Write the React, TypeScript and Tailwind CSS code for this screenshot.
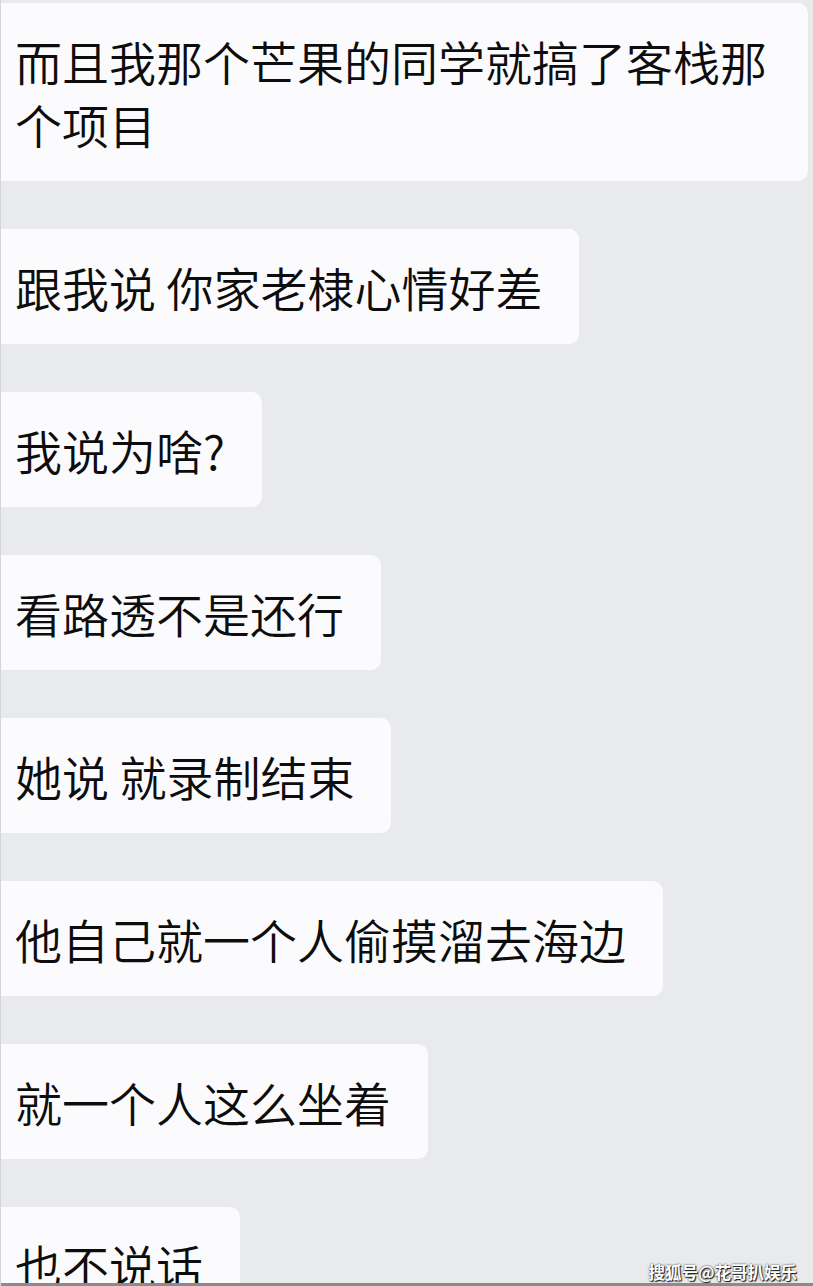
import React from 'react';

// 聊天截图：左侧白色气泡，灰色背景
const MESSAGES: string[] = [
  '而且我那个芒果的同学就搞了客栈那个项目',
  '跟我说 你家老棣心情好差',
  '我说为啥?',
  '看路透不是还行',
  '她说 就录制结束',
  '他自己就一个人偷摸溜去海边',
  '就一个人这么坐着',
  '也不说话',
];

const Bubble: React.FC<{ text: string }> = ({ text }) => (
  <div className="w-fit max-w-[807px] rounded-r-[10px] bg-[#fbfbfd] pl-[14px] pr-[37px] pt-[26px] pb-[26px] text-[47px] font-[350] leading-[63px] text-[#0d0d0d] whitespace-pre-wrap">
    {text}
  </div>
);

export default function App() {
  return (
    <div
      className="relative h-[1286px] w-[813px] overflow-hidden bg-[#e9eaec] border-l border-[#d4d5d8]"
      style={{ fontFamily: '"Noto Sans CJK SC", "Noto Sans", sans-serif' }}
    >
      <div className="flex flex-col gap-[48px] pt-[3px]">
        {MESSAGES.map((m, i) => (
          <Bubble key={i} text={m} />
        ))}
      </div>

      {/* 水印 */}
      <div className="absolute right-[16px] bottom-[6px] text-[16.5px] font-bold leading-none text-white [text-shadow:0_0_2px_#222,1px_1px_1px_#111]">
        搜狐号@花哥扒娱乐
      </div>
      <div className="absolute bottom-0 left-0 right-0 h-[3px] bg-[#8a8b8e]" />
    </div>
  );
}
